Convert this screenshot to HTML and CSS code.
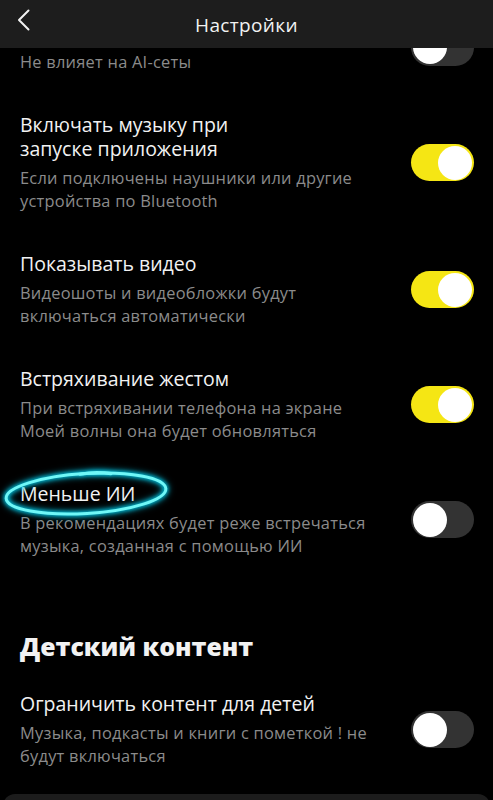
FILE: index.html
```html
<!DOCTYPE html>
<html lang="ru">
<head>
<meta charset="utf-8">
<title>Настройки</title>
<link rel="stylesheet" href="styles.css">
</head>
<body>
<div class="screen">
  <header class="topbar">
    <span class="back">
      <svg width="16" height="22" viewBox="0 0 16 22"><path d="M12.5 1.5 L3 11 L12.5 20.5" fill="none" stroke="#f2f2f2" stroke-width="2" stroke-linecap="round" stroke-linejoin="round"/></svg>
    </span>
    <h1 class="title">Настройки</h1>
  </header>
  <div class="viewport">
    <div class="list">
      <div class="row">
        <div class="text cut"><p class="sub">Не влияет на AI-сеты</p></div>
        <span class="toggle"></span>
      </div>
      <div class="row">
        <div class="text">
          <p class="name">Включать музыку при<br>запуске приложения</p>
          <p class="sub">Если подключены наушники или другие<br>устройства по Bluetooth</p>
        </div>
        <span class="toggle on"></span>
      </div>
      <div class="row">
        <div class="text">
          <p class="name">Показывать видео</p>
          <p class="sub">Видеошоты и видеобложки будут<br>включаться автоматически</p>
        </div>
        <span class="toggle on"></span>
      </div>
      <div class="row">
        <div class="text">
          <p class="name">Встряхивание жестом</p>
          <p class="sub">При встряхивании телефона на экране<br>Моей волны она будет обновляться</p>
        </div>
        <span class="toggle on"></span>
      </div>
      <div class="row">
        <div class="text">
          <p class="name marked">Меньше ИИ<svg class="circle" width="175" height="56" viewBox="0 0 175 56"><ellipse cx="86" cy="27.5" rx="80" ry="20" transform="rotate(-3.5 86 27.5)" fill="none" stroke="#6ff7f7" stroke-width="3"/><path d="M80 8.2 Q95 5.4 111 7.6" fill="none" stroke="#6ff7f7" stroke-width="3.2" stroke-linecap="round"/></svg></p>
          <p class="sub">В рекомендациях будет реже встречаться<br>музыка, созданная с помощью ИИ</p>
        </div>
        <span class="toggle"></span>
      </div>
      <h2 class="section">Детский контент</h2>
      <div class="row">
        <div class="text">
          <p class="name">Ограничить контент для детей</p>
          <p class="sub">Музыка, подкасты и книги с пометкой ! не<br>будут включаться</p>
        </div>
        <span class="toggle"></span>
      </div>
    </div>
  </div>
  <div class="player"></div>
</div>
</body>
</html>
```
FILE: styles.css
```css
* { box-sizing: border-box; }
html, body { margin: 0; padding: 0; background: #000; }
body { font-family: "Open Sans", "Noto Sans", sans-serif; color: #f2f2f2; }
.screen { width: 493px; height: 800px; overflow: hidden; display: flex; flex-direction: column; background: #000; }
.topbar { height: 48px; flex: none; background: #1d1d1d; display: flex; align-items: center; justify-content: center; position: relative; }
.back { position: absolute; left: 16px; top: 9px; display: flex; }
.title { margin: 0; font-size: 19px; letter-spacing: 0.35px; font-weight: 500; color: #f2f2f2; line-height: 24px; padding-top: 2px; }
.viewport { height: 746px; flex: none; overflow: hidden; }
.list { margin-top: -26.8px; display: flex; flex-direction: column; }
.row { display: flex; align-items: center; justify-content: space-between; padding: 0 19px 0 20px; margin-bottom: 40px; }
.text { flex: 1; min-width: 0; }
.text.cut { padding-top: 29px; }
.name { margin: 0; font-size: 19.5px; line-height: 24px; font-weight: 400; color: #f2f2f2; }
.sub { margin: 5px 0 0; font-size: 16.4px; letter-spacing: 0.25px; line-height: 23px; color: #8b8b8b; white-space: nowrap; }
.cut .sub { margin-top: 0; }
.marked { position: relative; }
.circle { position: absolute; left: -20px; top: -16.2px; filter: drop-shadow(0 0 2px #00e1ff) drop-shadow(0 0 3px #00b8d8); }
.toggle { flex: none; width: 63px; height: 37px; border-radius: 18.5px; background: #333; display: flex; align-items: center; justify-content: flex-start; padding: 0 2px; }
.toggle::after { content: ""; width: 34px; height: 34px; border-radius: 50%; background: #fff; }
.toggle.on { background: #f5e614; justify-content: flex-end; }
.section { margin: 33.3px 20px 31.7px; font-size: 24.8px; line-height: 30px; font-weight: 800; color: #f2f2f2; }
.list .row:last-child { margin-bottom: 0; }
.player { flex: none; height: 60px; margin: 0 3px; border-radius: 12px 12px 0 0; background: #1c1c1c; }
```
